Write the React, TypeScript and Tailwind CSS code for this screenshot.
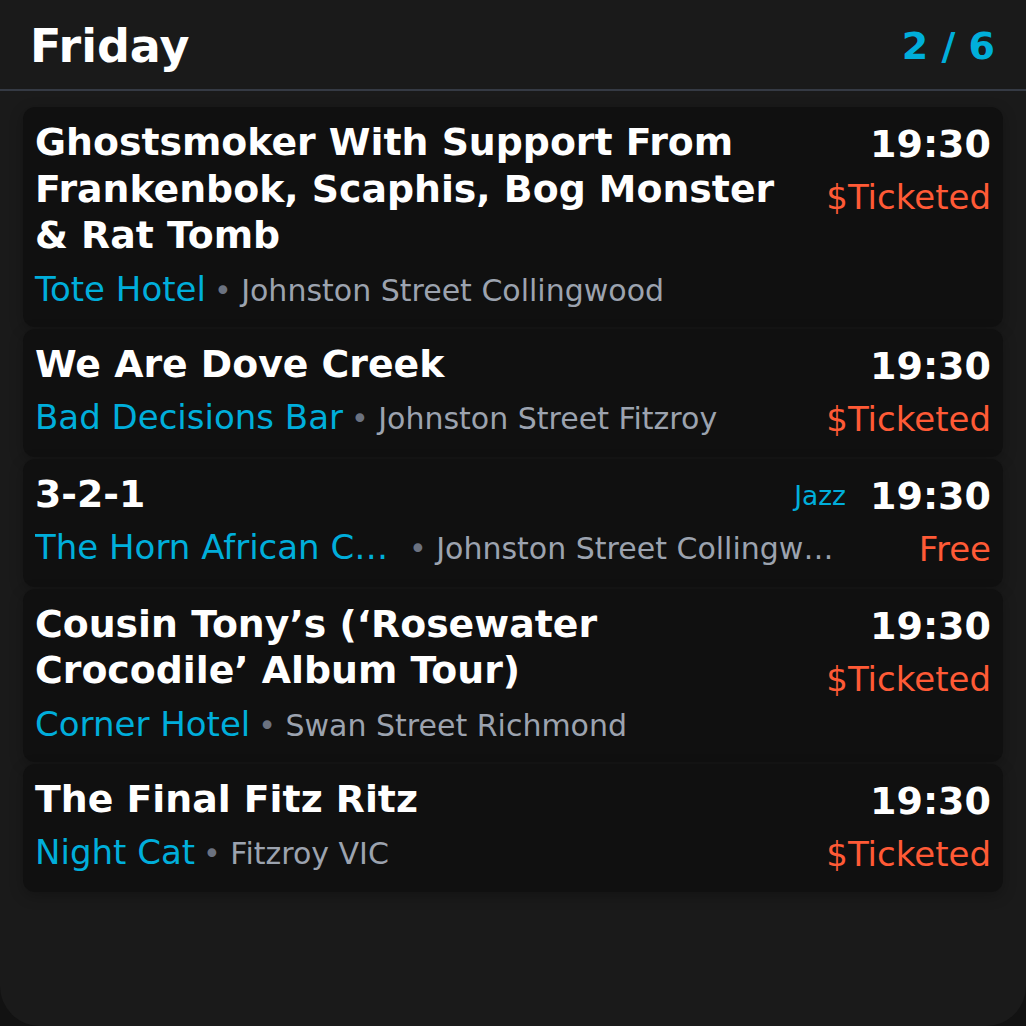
import React from 'react'

type Gig = {
    title: string
    venue: string
    address: string
    time: string
    price: string
    tag?: string
    truncate?: boolean
}

const gigs: Gig[] = [
    {
        title: 'Ghostsmoker With Support From Frankenbok, Scaphis, Bog Monster & Rat Tomb',
        venue: 'Tote Hotel',
        address: 'Johnston Street Collingwood',
        time: '19:30',
        price: '$Ticketed',
    },
    {
        title: 'We Are Dove Creek',
        venue: 'Bad Decisions Bar',
        address: 'Johnston Street Fitzroy',
        time: '19:30',
        price: '$Ticketed',
    },
    {
        title: '3-2-1',
        venue: 'The Horn African Community Centre',
        address: 'Johnston Street Collingwood',
        time: '19:30',
        price: 'Free',
        tag: 'Jazz',
        truncate: true,
    },
    {
        title: 'Cousin Tony\u2019s (\u2018Rosewater Crocodile\u2019 Album Tour)',
        venue: 'Corner Hotel',
        address: 'Swan Street Richmond',
        time: '19:30',
        price: '$Ticketed',
    },
    {
        title: 'The Final Fitz Ritz',
        venue: 'Night Cat',
        address: 'Fitzroy VIC',
        time: '19:30',
        price: '$Ticketed',
    },
]

const GigCard = ({ gig }: { gig: Gig }) => {
    return (
        <div className="flex gap-4 rounded-xl bg-[#101010] px-3 pt-3 pb-[13px] shadow-[0_4px_14px_rgba(0,0,0,0.25)]">
            <div className="flex min-w-0 flex-1 flex-col">
                <div className="text-[37.8px] font-bold leading-[46.5px] text-white">{gig.title}</div>
                <div className="mt-[6px] flex h-[49px] min-w-0 items-baseline whitespace-nowrap leading-[49px]">
                    <span className={`text-[34px] text-[#00aedb] ${gig.truncate ? 'w-[366px] shrink-0 truncate' : ''}`}>
                        {gig.venue}
                    </span>
                    <span className={`ml-2 min-w-0 truncate text-[30px] text-[#9ca3af] ${gig.truncate ? 'max-w-[432px]' : ''}`}>
                        <span className="text-[#6b7280]">•</span> {gig.address}
                    </span>
                </div>
            </div>
            <div className="flex shrink-0 flex-col items-end">
                <div className="relative text-[38px] font-bold leading-[50px] text-white">
                    {gig.tag && (
                        <span className="absolute right-full bottom-0 mr-6 text-[26.5px] font-normal leading-[50px] text-[#00aedb]">
                            {gig.tag}
                        </span>
                    )}
                    {gig.time}
                </div>
                <div className="mt-1 text-[34px] leading-[49px] text-[#ff5a36]">{gig.price}</div>
            </div>
        </div>
    )
}

const App = () => {
    return (
        <div className="min-h-screen bg-[#121212]" style={{ fontFamily: '"DejaVu Sans", Verdana, sans-serif' }}>
            <div className="h-[1026px] w-full rounded-b-[40px] bg-[#1a1a1a]">
                <div className="flex h-[91px] items-center justify-between border-b-2 border-[#353a44] pl-[30px] pr-[31px] pt-[2px]">
                    <span className="text-[46px] font-bold leading-none text-white">Friday</span>
                    <span className="text-[38px] font-bold leading-none text-[#00aedb]">2 / 6</span>
                </div>
                <div className="flex flex-col gap-[2px] px-[23px] pt-4">
                    {gigs.map((g) => (
                        <GigCard key={g.title} gig={g} />
                    ))}
                </div>
            </div>
        </div>
    )
}

export default App
